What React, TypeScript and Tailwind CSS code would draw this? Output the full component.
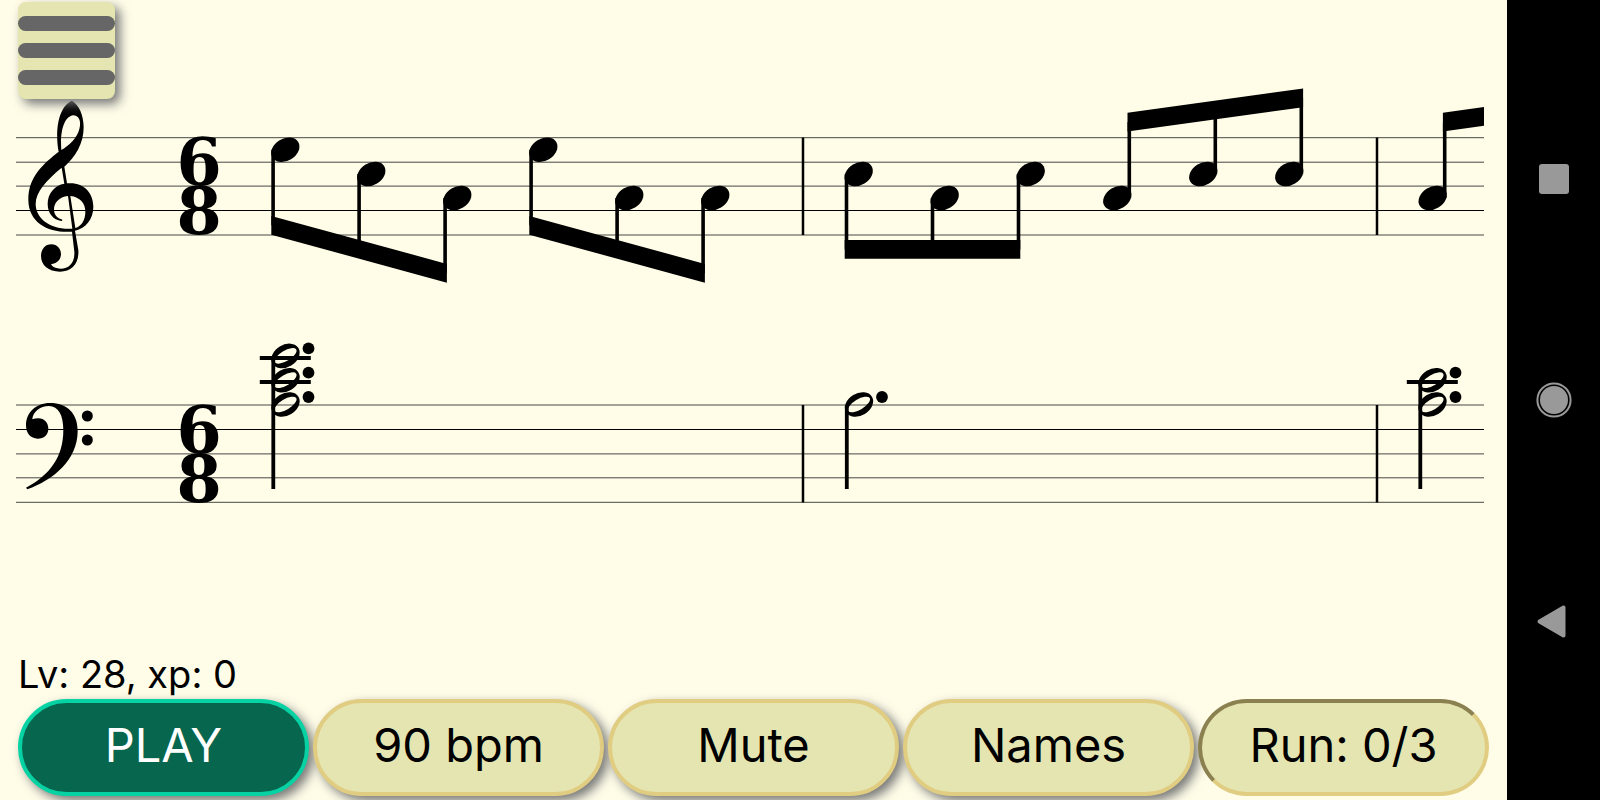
const trebleLines = [137.7, 162.2, 186.1, 210.5, 235];
const bassLines = [405, 429.5, 453.9, 477.8, 502.3];
const barLines = [803, 1377];
// the F line and G line carry the clefs and are drawn darker
const clefLines = [210.5, 429.5];

type Group = {
  stem: 'up' | 'down';
  notes: { x: number; y: number }[];
  // outer edge of the beam at the first and last stem
  from: number;
  to: number;
};

const E5 = 149.7;
const C5 = 174;
const A4 = 198;

const groups: Group[] = [
  { stem: 'down', notes: [{ x: 285.3, y: E5 }, { x: 371.3, y: C5 }, { x: 457.3, y: A4 }], from: 234.7, to: 282.7 },
  { stem: 'down', notes: [{ x: 543.3, y: E5 }, { x: 629.3, y: A4 }, { x: 715.3, y: A4 }], from: 234.7, to: 282.7 },
  { stem: 'down', notes: [{ x: 858.7, y: C5 }, { x: 944.7, y: A4 }, { x: 1030.7, y: C5 }], from: 258.7, to: 258.7 },
  { stem: 'up', notes: [{ x: 1117.3, y: A4 }, { x: 1203.3, y: C5 }, { x: 1289.3, y: C5 }], from: 112.7, to: 88.4 },
  { stem: 'up', notes: [{ x: 1432.7, y: A4 }, { x: 1518.7, y: C5 }, { x: 1604.7, y: C5 }], from: 112.7, to: 88.4 },
];

const chords = [
  { x: 285.5, ys: [355.9, 380.2, 404.5], ledgers: [358, 382] },
  { x: 859, ys: [404.5], ledgers: [] },
  { x: 1432.5, ys: [380.2, 404.5], ledgers: [382] },
];

const controls = [
  { label: 'PLAY', style: 'border-[#06d2a4] bg-[#07664e] text-white shadow-[5px_5px_11px_#777]' },
  { label: '90 bpm', style: 'border-[#e0cd82] bg-[#e5e5b1] text-black shadow-[5px_5px_11px_#777]' },
  { label: 'Mute', style: 'border-[#e0cd82] bg-[#e5e5b1] text-black shadow-[5px_5px_11px_#777]' },
  { label: 'Names', style: 'border-[#e0cd82] bg-[#e5e5b1] text-black shadow-[5px_5px_11px_#777]' },
  { label: 'Run: 0/3', style: 'border-t-[#8b8050] border-l-[#8b8050] border-r-[#e0cd82] border-b-[#e0cd82] bg-[#e5e5b1] text-black' },
];

function BeamedGroup({ stem, notes, from, to }: Group) {
  const dx = stem === 'up' ? 12 : -12.2;
  const thickness = stem === 'up' ? 18.8 : -18.8;
  const x1 = notes[0].x + dx;
  const x2 = notes[notes.length - 1].x + dx;
  const beamAt = (x: number) => from + ((to - from) * (x - x1)) / (x2 - x1) + thickness / 2;

  return (
    <g>
      {notes.map((note, index) => (
        <g key={index}>
          <ellipse rx="15.1" ry="11.1" transform={`translate(${note.x} ${note.y}) rotate(-31)`} />
          <path d={`M${note.x + dx} ${note.y}V${beamAt(note.x + dx)}`} stroke="black" strokeWidth="3.6" />
        </g>
      ))}
      <polygon
        points={`${x1 - 1.8},${from} ${x2 + 1.8},${to} ${x2 + 1.8},${to + thickness} ${x1 - 1.8},${from + thickness}`}
      />
    </g>
  );
}

function Chord({ x, ys, ledgers }: { x: number; ys: number[]; ledgers: number[] }) {
  return (
    <g>
      {ledgers.map((y) => (
        <path key={y} d={`M${x - 25.7} ${y}h51`} stroke="black" strokeWidth="3.8" />
      ))}
      {ys.map((y) => (
        <g key={y} transform={`translate(${x} ${y})`}>
          <path
            fillRule="evenodd"
            transform="rotate(-31)"
            d="M-15.1 0a15.1 11.1 0 1 0 30.2 0a15.1 11.1 0 1 0 -30.2 0zM-12.5 0a12.5 5.2 0 1 0 25 0a12.5 5.2 0 1 0 -25 0z"
          />
          <circle cx="23" cy="-7.5" r="5.9" />
        </g>
      ))}
      <path d={`M${x - 12.2} ${ys[0] + 1}V489`} stroke="black" strokeWidth="3.8" />
    </g>
  );
}

function TrebleClef() {
  return (
    <path
      fillRule="evenodd"
      transform="scale(0.33333)"
      d="M216 302C237 315 251 345 251 382C251 430 227 470 193 500L201 550C250 545 280 577 280 620C280 658 257 685 225 692L235 750C238 790 215 815 180 815C145 815 123 795 123 768C123 747 136 733 154 733C172 733 183 747 183 762C183 780 170 790 153 793C158 802 168 806 182 806C206 806 225 790 223 755L216 695C150 700 86 672 85 600C84 530 130 492 176 455C168 420 165 325 216 302Z
      M184 450C180 400 190 350 220 346C238 346 244 365 238 387C231 415 208 436 184 450Z
      M185 503C140 540 107 575 107 612C107 655 150 690 217 686L204 588C176 591 161 610 162 630C163 648 174 655 187 659C187 661 186 663 184 663C160 660 143 640 143 612C143 580 165 555 193 551Z
      M211 588C240 591 256 610 256 635C256 660 245 678 226 684Z"
    />
  );
}

function BassClef() {
  return (
    <g transform="translate(0 330) scale(0.33333)">
      <path d="M78 473C150 435 190 380 190 300C190 255 175 228 147 228C120 228 98 247 97 268C102 266 108 265 115 265C133 265 145 278 145 296C145 314 132 326 113 326C92 326 78 310 78 286C78 248 107 219 150 219C202 219 233 250 233 303C233 390 160 450 82 478Z" />
      <circle cx="262" cy="258" r="16.5" />
      <circle cx="262" cy="330" r="16.5" />
    </g>
  );
}

function TimeSignature({ y }: { y: number }) {
  return (
    <text className="font-['DejaVu_Serif',serif] text-[65px] font-bold" textAnchor="middle">
      <tspan x="199" y={y}>6</tspan>
      <tspan x="199" y={y + 49}>8</tspan>
    </text>
  );
}

function Score() {
  return (
    <svg viewBox="0 0 1507 560" className="block w-full" role="img" aria-label="Score">
      <clipPath id="staff-area">
        <rect x="0" y="0" width="1484" height="560" />
      </clipPath>
      <g clipPath="url(#staff-area)">
        {[...trebleLines, ...bassLines].map((y) => (
          <path
            key={y}
            d={`M16 ${y}H1484`}
            stroke={clefLines.includes(y) ? 'black' : '#333'}
            strokeWidth={clefLines.includes(y) ? 1 : 0.9}
          />
        ))}
        {barLines.map((x) => (
          <path key={x} d={`M${x} 137.6V235M${x} 405V502.6`} stroke="black" strokeWidth="2.5" />
        ))}
        <TrebleClef />
        <BassClef />
        <TimeSignature y={185} />
        <TimeSignature y={453} />
        {groups.map((group, index) => (
          <BeamedGroup key={index} {...group} />
        ))}
        {chords.map((chord, index) => (
          <Chord key={index} {...chord} />
        ))}
      </g>
    </svg>
  );
}

function SystemBar() {
  return (
    <nav className="sticky top-0 flex h-screen w-[93px] shrink-0 flex-col items-center justify-evenly bg-black text-[#999]">
      <button aria-label="Recent apps" className="flex size-[86px] items-center justify-center">
        <span className="size-[30px] rounded-[3px] bg-current" />
      </button>
      <button aria-label="Home" className="flex size-[86px] items-center justify-center">
        <svg viewBox="0 0 36 36" className="size-9">
          <circle cx="18" cy="18" r="16.6" fill="none" stroke="currentColor" strokeWidth="2" />
          <circle cx="18" cy="18" r="14" fill="currentColor" />
        </svg>
      </button>
      <button aria-label="Back" className="flex size-[86px] items-center justify-center">
        <svg viewBox="0 0 36 36" className="size-9">
          <path
            d="M3.5 17.5L27.5 3.5V31.5Z"
            fill="currentColor"
            stroke="currentColor"
            strokeWidth="4"
            strokeLinejoin="round"
          />
        </svg>
      </button>
    </nav>
  );
}

export default function App() {
  return (
    <div className="flex min-h-screen bg-[#fffde8] font-[Inter,sans-serif] text-black">
      <main className="relative flex min-w-0 flex-1 flex-col">
        <button
          aria-label="Menu"
          className="absolute top-[2px] left-[18px] flex size-[97px] flex-col justify-center gap-3 rounded-lg bg-[#e5e5b1] shadow-[5px_5px_11px_#777]"
        >
          <span className="h-[15px] w-full rounded-full bg-[#666]" />
          <span className="h-[15px] w-full rounded-full bg-[#666]" />
          <span className="h-[15px] w-full rounded-full bg-[#666]" />
        </button>
        <Score />
        <div className="mt-auto px-[18px] pb-1">
          <p className="text-[38px] leading-[50px]">Lv: 28, xp: 0</p>
          <div className="flex gap-1">
            {controls.map((control) => (
              <button
                key={control.label}
                className={`h-[97px] min-w-0 flex-1 rounded-full border-4 pb-1 text-[47px] ${control.style}`}
              >
                {control.label}
              </button>
            ))}
          </div>
        </div>
      </main>
      <SystemBar />
    </div>
  );
}
